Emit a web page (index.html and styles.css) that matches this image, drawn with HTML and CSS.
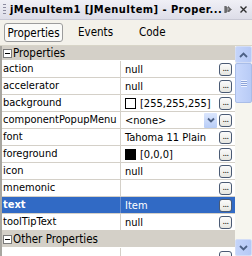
FILE: index.html
```html
<!DOCTYPE html>
<html>
<head>
<meta charset="utf-8">
<link rel="stylesheet" href="styles.css">
</head>
<body>
<div class="panel">
  <div class="titlebar">
    <span class="grip"></span>
    <span class="title">jMenuItem1 [JMenuItem] - Proper...</span>
    <span class="tbicons">
      <svg width="9" height="9" viewBox="0 0 9 9"><path d="M1 1v7M2 1v7M3 2v5M4 2h1M4 6h1M5 2v5M6 3v3M7 4v1" stroke="#404040" stroke-width="1" fill="none"/></svg>
      <svg width="9" height="9" viewBox="0 0 9 9"><path d="M1.5 1.5l6 6M7.5 1.5l-6 6" stroke="#303030" stroke-width="1.4"/></svg>
    </span>
  </div>
  <div class="tabs">
    <div class="tab sel">Properties</div>
    <div class="tab">Events</div>
    <div class="tab">Code</div>
  </div>
  <div class="body">
    <div class="table">
      <div class="section"><span class="minus"></span>Properties</div>
      <div class="row"><div class="name">action</div><div class="val"><span class="v">null</span><span class="dots">...</span></div></div>
      <div class="row"><div class="name">accelerator</div><div class="val"><span class="v">null</span><span class="dots">...</span></div></div>
      <div class="row"><div class="name">background</div><div class="val"><span class="v"><span class="sw white"></span>[255,255,255]</span><span class="dots">...</span></div></div>
      <div class="row"><div class="name">componentPopupMenu</div><div class="val"><span class="v">&lt;none&gt;</span><span class="combo"><svg width="8" height="6" viewBox="0 0 8 6"><path d="M1 1.5l3 3 3-3" stroke="#4d6185" stroke-width="1.8" fill="none"/></svg></span><span class="dots">...</span></div></div>
      <div class="row"><div class="name">font</div><div class="val"><span class="v">Tahoma 11 Plain</span><span class="dots">...</span></div></div>
      <div class="row"><div class="name">foreground</div><div class="val"><span class="v"><span class="sw black"></span>[0,0,0]</span><span class="dots">...</span></div></div>
      <div class="row"><div class="name">icon</div><div class="val"><span class="v">null</span><span class="dots">...</span></div></div>
      <div class="row"><div class="name">mnemonic</div><div class="val"><span class="v"></span><span class="dots">...</span></div></div>
      <div class="row selrow"><div class="name">text</div><div class="val"><span class="v">Item</span><span class="dots">...</span></div></div>
      <div class="row"><div class="name">toolTipText</div><div class="val"><span class="v">null</span><span class="dots">...</span></div></div>
      <div class="section other"><span class="minus"></span>Other Properties</div>
      <div class="row last"><div class="name"></div><div class="val"><span class="v"></span><span class="dots"></span></div></div>
    </div>
    <div class="scroll">
      <div class="sbtn"><svg width="9" height="6" viewBox="0 0 9 6"><path d="M1 5l3.5-3.5L8 5" stroke="#4d6185" stroke-width="1.8" fill="none"/></svg></div>
      <div class="thumb"><span class="grips"></span></div>
      <div class="track"></div>
      <div class="sbtn"><svg width="9" height="6" viewBox="0 0 9 6"><path d="M1 1l3.5 3.5L8 1" stroke="#4d6185" stroke-width="1.8" fill="none"/></svg></div>
    </div>
  </div>
</div>
</body>
</html>
```
FILE: styles.css
```css
* { box-sizing: border-box; }
html, body { margin: 0; padding: 0; }
body { background: #ece9d8; font-family: "DejaVu Sans Condensed", "DejaVu Sans", sans-serif; font-size: 11px; color: #000; }
.panel { width: 252px; height: 256px; overflow: hidden; display: flex; flex-direction: column; background: #f1efe6; }
.titlebar { height: 20px; display: flex; align-items: center; background: linear-gradient(#f0f0f6, #dddde8); border-bottom: 1px solid #c8c8d4; padding-left: 3px; }
.grip { width: 3px; height: 12px; margin-right: 4px; background: repeating-linear-gradient(#8c8ca0 0 1px, transparent 1px 3px); }
.title { font-weight: bold; font-size: 11px; flex: 1; white-space: nowrap; letter-spacing: 0.45px; }
.tbicons { display: flex; gap: 6px; padding-right: 4px; align-items: center; }
.tabs { height: 26px; display: flex; align-items: center; padding-left: 4px; background: #f3f1ea; border-bottom: 1px solid #d8d5c8; }
.tab { height: 19px; line-height: 18px; font-size: 11.5px; }
.tab.sel { width: 59px; text-align: center; background: #fafaf8; border: 1px solid #9c9c9c; border-radius: 3px; margin-right: 15px; }
.tab.sel + .tab { margin-right: 26px; }
.body { flex: 1; display: flex; min-height: 0; }
.table { flex: 1; border-left: 2px solid #a8a6a0; overflow: hidden; background: #fff; }
.section { height: 14px; background: #d4d0c8; display: flex; align-items: center; font-size: 11.5px; margin-bottom: 1px; }
.section.other { height: 16px; }
.minus { width: 9px; height: 9px; border: 1px solid #7a7a7a; background: #fff; margin: 0 1px 0 1px; position: relative; }
.minus::after { content: ""; position: absolute; left: 1px; right: 1px; top: 3px; height: 1px; background: #000; }
.row { height: 17px; display: flex; border-bottom: 1px solid #d4d0c8; background: #fff; }
.name { width: 119px; border-right: 1px solid #d4d0c8; padding-left: 1px; line-height: 16px; white-space: nowrap; overflow: hidden; font-size: 11px; }
.val { flex: 1; display: flex; align-items: center; padding-left: 4px; padding-right: 3px; font-size: 11px; }
.v { flex: 1; white-space: nowrap; display: flex; align-items: center; }
.sw { width: 11px; height: 11px; border: 1px solid #000; margin-right: 4px; }
.sw.white { background: #fff; }
.sw.black { background: #000; }
.dots { width: 13px; height: 13px; border: 1px solid #4a5a74; border-radius: 3px; background: linear-gradient(#fbfbfb, #e6e6e0); font-size: 9px; line-height: 8px; text-align: center; color: #000; letter-spacing: -0.5px; }
.last .dots { margin-top: 3px; align-self: flex-start; }
.combo { width: 13px; height: 15px; background: linear-gradient(#dbe6fd, #b8cdf7); display: flex; align-items: center; justify-content: center; margin-right: 2px; border-radius: 1px; }
.selrow { background: #316ac5; color: #fff; }
.selrow .name { font-weight: bold; border-right-color: #6b8fd0; }
.scroll { width: 17px; display: flex; flex-direction: column; background: #f6f5ee; }
.sbtn { height: 17px; background: linear-gradient(90deg, #c4d4fa, #b6c9f5); border: 1px solid #d3ddf6; border-radius: 2px; display: flex; align-items: center; justify-content: center; }
.thumb { height: 40px; background: linear-gradient(90deg, #c9d8fc, #b8cbf6); border: 1px solid #a9bde8; border-radius: 2px; display: flex; align-items: center; justify-content: center; }
.grips { width: 6px; height: 7px; background: repeating-linear-gradient(#eef3ff 0 1px, #8ca3d8 1px 2px); }
.track { flex: 1; }
```
